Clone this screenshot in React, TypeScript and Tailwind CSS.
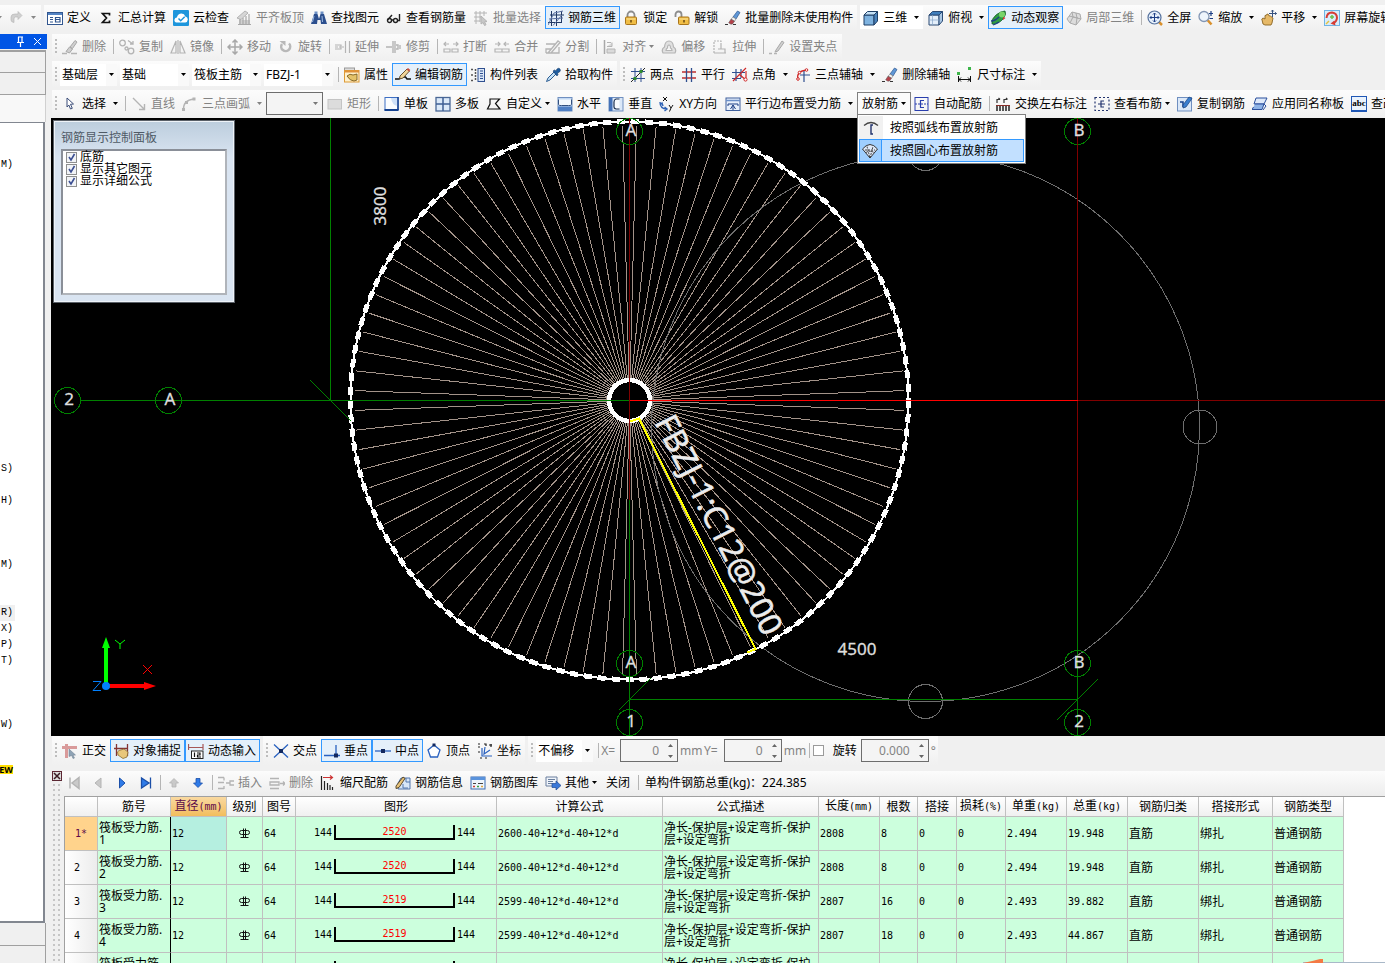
import React from 'react';
import clsx from 'clsx';

const navy = '#2f4f8f';
const gray = '#b4b4b4';

/* 16x16 toolbar icons */
const icons: Record<string, React.ReactNode> = {
  redo: (
    <path d="M3 10V7q0-3 4-3h3V1.5L14 5.500 10 9.500V7H7.500Q6 7 6 9v3.500Q3 12 3 10Z" fill="#d0d0d0" stroke={gray} strokeWidth="0.600" />
  ),
  define: (
    <>
      <rect x="0.500" y="2.500" width="15" height="12" fill="#fff" stroke="#31568f" />
      <rect x="1" y="3" width="14" height="2" fill="#5484c4" />
      <path d="M3 7.500h3M3 9.500h3M3 12h3" stroke="#31568f" />
      <path d="M8.500 7.500h4.500v4.500H8.500zM8.500 9.500H13" fill="none" stroke="#31568f" strokeWidth="1.200" />
    </>
  ),
  sigma: <path d="M11.500 5.500V3.500H4.500L8.500 8l-4 4.500h7v-2" fill="none" stroke="#111" strokeWidth="1.700" />,
  cloud: (
    <>
      <rect width="16" height="16" rx="1" fill="#1e96dc" />
      <path d="M3.500 12.500q-2.500-.500-2-3 .500-1.800 2.300-2Q5 3.500 8.500 3.500q3 .200 3.800 3 2.500.500 2.500 3-.200 2.500-2.500 3Z" fill="#fff" />
      <path d="m5.500 8.500 2.200 2.200 4-4" fill="none" stroke="#1e96dc" strokeWidth="1.500" />
    </>
  ),
  slabTop: (
    <>
      <path d="m1 8 8-7 3 2-7 6.500Z" fill="#d6d6d6" stroke={gray} />
      <path d="M3 10h11v4.500H3Z" fill="#d0d0d0" />
      <path d="M4 9v6M7 8v7M10 6v9M13 4v11M2 14.500h13" stroke="#a8a8a8" strokeWidth="1.200" />
    </>
  ),
  binoculars: (
    <>
      <path d="M3 4h3.500L8 9l1.500-5H13l3 10h-6l-.500-4h-3L6 14H0Z" fill="#2c4f8e" />
      <path d="M3.500 1.500h3V4h-3zM9.500 1.500h3V4h-3z" fill="#6c8fc4" />
      <path d="M3 6 1.500 12M11 6l.500 6" stroke="#9db9e2" />
    </>
  ),
  glasses: (
    <g fill="none" stroke="#222" strokeWidth="1.400">
      <circle cx="3.500" cy="10.500" r="2" />
      <circle cx="9.500" cy="10.500" r="2" />
      <path d="M5.500 10h2M1.500 10 6 5M11.500 10.500h2V4" />
    </g>
  ),
  batchSelect: (
    <>
      <path d="M1 3h13M1 7h7M1 11h6M3 1v13M7 1v11M11 1v5" stroke={gray} fill="none" />
      <path d="m8 6 6 5.500-2.500.300 1.500 3-1.500.700-1.400-3L8 14Z" fill="#c8c8c8" stroke={gray} />
    </>
  ),
  rebar3d: (
    <g fill="none" stroke="#1f3864">
      <path d="M2 5h14M0 12.500h13M3.500 1v15M8.500 1v15M13.500 1v12" />
      <path d="M1 9 15 8M0 15 6 3l9-2M5 15.500 14 5" stroke="#5a70a0" />
    </g>
  ),
  lock: (
    <>
      <path d="M4.500 8V5a3.500 3.500 0 0 1 7 0v3" fill="none" stroke="#8c8c8c" strokeWidth="1.800" />
      <rect x="2.500" y="7" width="11" height="7.500" rx="1" fill="#f0bd45" stroke="#a8741a" />
      <path d="M3.500 9h9" stroke="#fbe49c" />
      <path d="M8 10v2.500" stroke="#6b4a10" strokeWidth="1.500" />
    </>
  ),
  unlock: (
    <>
      <path d="M1.500 7V4.500a3 3 0 0 1 6 0V8" fill="none" stroke="#8c8c8c" strokeWidth="1.800" />
      <rect x="4.500" y="7" width="10.500" height="7.500" rx="1" fill="#f0bd45" stroke="#a8741a" />
      <path d="M5.500 9h8.500" stroke="#fbe49c" />
      <path d="M10 10v2.500" stroke="#6b4a10" strokeWidth="1.500" />
    </>
  ),
  eraser: (
    <>
      <path d="M8 7 12.500 1 15 2.500 11 9Z" fill="#5f97d6" stroke="#2d568f" strokeWidth="0.700" />
      <path d="m8 7 3 2-1.500 2.200-3.500-2Z" fill="#f2f2f2" stroke="#777" strokeWidth="0.600" />
      <path d="m6 9.200 3.500 2L7.500 14q-2 .800-3.800-1.200Z" fill="#b5424a" stroke="#555" strokeWidth="0.500" />
      <path d="M0 14.500h3M8 14.500h3" stroke="#333" />
    </>
  ),
  brushGray: (
    <>
      <path d="m8 8 5-6.500 2 1.500-4.500 6.500ZM4 12.500 7.500 8l3 2-3 4Z" fill="#cfcfcf" stroke="#a8a8a8" />
      <path d="M0 14.500h5M9 14.500h6" stroke={gray} strokeWidth="1.500" />
    </>
  ),
  cube: (
    <>
      <path d="M1 5h10v10H1Z" fill="#7fb3e0" stroke="#1e3f66" />
      <path d="m1 5 3.500-3.500h10L11 5Z" fill="#c5e1f6" stroke="#1e3f66" />
      <path d="m11 5 3.500-3.500V11L11 15Z" fill="#4a82bb" stroke="#1e3f66" />
    </>
  ),
  cubeTop: (
    <>
      <path d="M1 5h10v10H1Z" fill="#e4effa" stroke="#2a4a74" />
      <path d="m1 5 3.500-3.500h10L11 5Z" fill="#3f7fbd" stroke="#2a4a74" />
      <path d="m11 5 3.500-3.500V11L11 15Z" fill="#a9c6e3" stroke="#2a4a74" />
      <path d="M4.500 5v10M1 10h10" stroke="#87a6c8" strokeWidth="0.700" />
    </>
  ),
  orbit: (
    <>
      <path d="M1 14Q0 9 5 5t9-4q2 3-2 8t-11 5Z" fill="#2f9c44" stroke="#17602a" strokeWidth="0.800" />
      <circle cx="11" cy="4.500" r="3" fill="#79d46a" />
      <path d="M0 11q4 0 8-4M2 15q3-1 6-3" fill="none" stroke="#1d3f85" strokeWidth="1.300" />
      <path d="m12 7 2.500 1L12 10Z" fill="#d33" />
    </>
  ),
  local3d: (
    <>
      <path d="M1 9 6 2l8 2 1 5-5 6-6-2Z" fill="#dcdcdc" stroke="#ababab" />
      <path d="m6 2 1 5-3 6M7 7l8 2M10 3l1 5-1 7M3 6l9 2" fill="none" stroke="#ababab" />
    </>
  ),
  fullscreen: (
    <>
      <path d="m12 12 3 3" stroke="#d9902c" strokeWidth="2.500" />
      <circle cx="7.500" cy="7.500" r="6.500" fill="#e6f0fb" stroke="#55719d" strokeWidth="1.200" />
      <path d="M7.500 3v9M3 7.500h9M6 4.500 7.500 3 9 4.500M6 10.500 7.500 12 9 10.500M4.500 6 3 7.500 4.500 9M10.500 6 12 7.500 10.500 9" fill="none" stroke="#1d3f85" />
    </>
  ),
  zoom: (
    <>
      <path d="m9.500 10 4 4.500" stroke="#d9902c" strokeWidth="2.600" />
      <circle cx="6" cy="6.500" r="5" fill="#eef5fc" stroke="#8296b4" strokeWidth="1.300" />
      <path d="M13 1v5M11 3.500h4M11.500 8.500h3.500" stroke="#1d3f85" strokeWidth="1.200" />
    </>
  ),
  pan: (
    <>
      <path d="M2 14 .800 9l1.200-1 2 1V5.500l1.500-.300L6 4l1.500.500.300 1.200 1.500.300L12 8l-1 5-1 2H4Z" fill="#e6b968" stroke="#8a6420" strokeWidth="0.900" />
      <path d="M11.500 0v7M8 3.500h7.500M10.300 1.500 11.500 0l1.200 1.500M14 2.300 15.500 3.500 14 4.700" fill="none" stroke="#37517e" />
    </>
  ),
  screenRotate: (
    <>
      <rect x="0.500" y="0.500" width="15" height="15" fill="#d9ecfa" stroke="#6fb4e4" />
      <path d="M2.500 8q.500-5.500 5.500-5.500 5 .500 5 5.500-.500 4-3.500 5" fill="none" stroke="#d63c34" strokeWidth="2" />
      <path d="m10.500 10.500-4 3 5 2Z" fill="#d63c34" />
      <path d="M6 7h4M8 5v4" stroke="#6cbf4b" strokeWidth="1.500" />
      <path d="M2 14 5 11" stroke="#e7c33c" strokeWidth="1.500" />
    </>
  ),
  copyGray: (
    <g fill="none" stroke={gray} strokeWidth="1.300">
      <circle cx="3.500" cy="4" r="2.800" />
      <circle cx="12" cy="12" r="2.800" />
      <circle cx="7.500" cy="9.500" r="1.500" />
      <path d="M9 1.500 14 5m0-3v3h-3" />
    </g>
  ),
  mirror: <path d="M6 2v12H1ZM10 2v12h5ZM8 1v14" fill="none" stroke={gray} strokeWidth="1.200" />,
  move: (
    <path d="M8 1v14M1 8h14M5.500 3.500 8 1l2.500 2.500M5.500 12.500 8 15l2.500-2.500M3.500 5.500 1 8l2.500 2.500M12.500 5.500 15 8l-2.500 2.500" fill="none" stroke="#a8a8a8" strokeWidth="1.500" />
  ),
  rotate: (
    <>
      <path d="M4 5a4.500 4.500 0 1 0 7-.500" fill="none" stroke="#b8b8b8" strokeWidth="2.500" />
      <path d="M1.500 2h6v5Z" fill="#b8b8b8" />
    </>
  ),
  extend: <path d="M0 8h3M4 8h2M7 8h2M0 6h6v4H0M10.500 2v12M14.500 2v12" fill="none" stroke={gray} strokeWidth="1.200" />,
  trim: <path d="M0 8h6M10 6h2v4h-2M14 6v4M7 2v12M9 2v12" fill="none" stroke={gray} strokeWidth="1.400" />,
  breakIt: <path d="M1 13h6v-3H1zM9 13h6v-3H9zM6 5H1m2-2L1 5l2 2M10 5h5m-2-2 2 2-2 2" fill="none" stroke={gray} strokeWidth="1.200" />,
  merge: <path d="M1 13h7v-3H1zM8 13h7v-3H8zM1 5h5M4 3l2 2-2 2M15 5h-5m2-2-2 2 2 2" fill="none" stroke={gray} strokeWidth="1.200" />,
  split: <path d="M1 5h9M1 14h13V8M1 14v-4h5M3 14 13 2l2 1.500L6 14" fill="none" stroke={gray} strokeWidth="1.300" />,
  align: (
    <>
      <path d="M2.500 1v14" stroke="#a8a8a8" strokeWidth="1.500" />
      <path d="M5 3.500h4M5 7.500h5v-4M5 10h8v4H5z" fill="#dadada" stroke={gray} />
    </>
  ),
  offset: (
    <g fill="#e0e0e0" stroke={gray} strokeWidth="1.200">
      <path d="M2 14q-2-4 1.500-6 .500-6 4.500-6t4.500 6q3.500 2 1.500 6Z" />
      <path d="M5 11.500q0-2 1.500-2.500 0-3 1.500-3t1.500 3q1.500.500 1.500 2.500Z" fill="#f7f7f7" />
    </g>
  ),
  stretch: (
    <g fill="none" stroke={gray} strokeWidth="1.200">
      <path d="M2 14V2h7v3" strokeDasharray="2 1" />
      <path d="M2 14h12M9 5v5h4v4M6 10h3" />
    </g>
  ),
  grip: (
    <>
      <path d="M0 14.500h3M5 14.500h3" stroke={gray} strokeWidth="1.500" />
      <path d="m7 11 6-9 2 1.500-6 8.500-3 1Z" fill="#d0d0d0" stroke="#a8a8a8" />
    </>
  ),
  property: (
    <>
      <rect x="0.500" y="1" width="10" height="3" fill="#ddd" stroke="#999" />
      <rect x="0.500" y="3.500" width="14.500" height="11.500" fill="#fff1cd" stroke="#dd9a35" />
      <path d="M1 4.500h14" stroke="#e0913a" strokeWidth="2" />
      <path d="M3 9q3-3 6-1l4-1v6l-3 1q-4 0-7-5Z" fill="#e4c269" stroke="#6e5114" strokeWidth="0.800" />
    </>
  ),
  editRebar: (
    <>
      <path d="M0 12h4l2.500-2h4L12 12h4" fill="none" stroke="#111" strokeWidth="1.500" />
      <path d="m5 9 7-7 2.500 2L8 11l-3.500 1Z" fill="#f0d59a" stroke="#5c4420" strokeWidth="0.900" />
      <path d="m11.500 2.500 1.500-1.500 2.300 2L14 4.500Z" fill="#cc4b3d" />
    </>
  ),
  memberList: (
    <>
      <path d="M1 2.500h3M1 8h3M1 13.500h3M5.500 2v12" stroke="#555" strokeWidth="1.500" strokeDasharray="2 1" />
      <rect x="8" y="1.500" width="6.500" height="13" fill="#dce8f8" stroke={navy} />
      <path d="M10 4h3M10 6.500h3M10 9h3M10 11.500h3" stroke={navy} />
    </>
  ),
  pick: (
    <>
      <path d="M1.500 14.500 3 11l6-6 2 2-6 6Z" fill="#c6e2f7" stroke="#2c5d93" />
      <path d="m8 4 1.500-1L11 4l1-2q2-1.500 3 0t-.500 3L12.500 6l.500 1.500L12 9Z" fill="#1f5da0" stroke="#153c6c" strokeWidth="0.600" />
    </>
  ),
  twoPoint: (
    <>
      <path d="M1 4.500h14M1 11.500h14M5 1v14M11 1v14" stroke={navy} />
      <path d="M1 15 15 1" stroke="#222" />
      <path d="M3.500 10h3v3h-3zM9.500 3h3v3h-3z" fill="#2f8c2f" />
    </>
  ),
  parallel: (
    <>
      <path d="M1 5h14M1 11h14" stroke="#c02f2f" strokeWidth="1.300" />
      <path d="M5.500 1v14M10.500 1v14" stroke={navy} strokeWidth="1.300" />
    </>
  ),
  pointAngle: (
    <>
      <path d="M0 5.500h13M0 11.500h9M4 2v12M9 2v9" stroke={navy} strokeWidth="1.200" />
      <path d="M1 14 14 1M8 8l6 5M14 4v7" stroke="#d02828" strokeWidth="1.200" />
      <circle cx="13.500" cy="12.500" r="1.600" fill="#fff" stroke="#d02828" />
    </>
  ),
  threePoint: (
    <>
      <path d="M3 12Q1 4 12 3" fill="none" stroke="#d02828" strokeWidth="1.400" />
      <path d="M5 8h10M9 4v11" stroke={navy} strokeWidth="1.200" />
      <circle cx="3" cy="12" r="1.300" fill="#fff" stroke="#d02828" />
      <circle cx="4.500" cy="5.500" r="1.300" fill="#fff" stroke="#d02828" />
      <circle cx="11.500" cy="3" r="1.300" fill="#fff" stroke="#d02828" />
    </>
  ),
  dimension: (
    <>
      <path d="M1.500 9v6M13.500 9v6M2 12.500h11M4 10.500 2 12.500l2 2M11 10.500l2 2-2 2" fill="none" stroke="#111" />
      <path d="M0 5h3v3H0zM11 0h3v3h-3z" fill="#3db54a" />
    </>
  ),
  cursor: <path d="m5 2 6.500 6-3 .300 1.800 4-1.800.700-1.700-4L5 11Z" fill="#fff" stroke="#3b4d78" />,
  lineGray: <path d="m2 2 11 11M13.500 8v5.500H8" fill="none" stroke={gray} strokeWidth="1.400" />,
  arcGray: (
    <>
      <path d="M1.500 14Q1 4 12 3" fill="none" stroke={gray} strokeWidth="1.400" />
      <path d="M0 12h3v3H0zM3 5h3v3H3zM10.500 1.500h3v3h-3z" fill={gray} />
    </>
  ),
  rectGray: <rect x="1" y="3.500" width="13.500" height="9.500" fill="#dcdcdc" stroke="#c4c4c4" />,
  oneSlab: (
    <>
      <rect x="1" y="1.500" width="13" height="12.500" fill="#fbfdff" stroke="#3d6fc4" />
      <path d="M7 2h6.500v8Q8 9 7 2Z" fill="#cfe1f8" />
      <path d="M.500 14h14" stroke="#14418f" strokeWidth="2" />
      <path d="M14 1v13" stroke="#14418f" strokeWidth="1.500" />
    </>
  ),
  multiSlab: (
    <>
      <rect x="1" y="1.500" width="14" height="13.500" fill="#dbe9f9" stroke="#4a6795" strokeWidth="1.300" />
      <path d="M8 1.500v13.500M1 8h14" stroke="#3f5f94" strokeWidth="1.500" />
    </>
  ),
  custom: <path d="M4 3h9.500L9.500 7.500l4.500 5.500H1.500L4 8Z" fill="none" stroke="#111" strokeWidth="1.200" />,
  horizontal: (
    <>
      <rect x="1" y="1.500" width="14" height="13.500" fill="#c3d8f3" stroke="#6f8fc0" />
      <path d="M1 10.500h14V15H1Z" fill="#4f7fc4" />
      <path d="M1.500 3.500v5q1 1.500 3 1h7q2 .500 3-1v-5" fill="#f4f9fe" stroke="#33507f" />
    </>
  ),
  vertical: (
    <>
      <rect x="1" y="1.500" width="14" height="13.500" fill="#dbe8f8" stroke="#6f8fc0" />
      <path d="M1 1.500h3.500V15H1Z" fill="#4472b8" />
      <path d="M11.500 3H8q-2 .500-2 3v5q0 1.500 2 2h3.500" fill="#f8fbfe" stroke="#1f3352" strokeWidth="1.200" />
    </>
  ),
  xy: (
    <>
      <path d="m4 1 4 4M8 1 4 5M10 9l2 3 2-3M12 12l-1.500 3.500" stroke="#111" fill="none" />
      <path d="M1 6q0 7 7 7M5.500 11 8 13l-2.500 2M1 9l2-2 1 3" fill="none" stroke="#2e62b5" strokeWidth="1.400" />
    </>
  ),
  edges: (
    <>
      <rect x="1" y="2" width="14" height="12.500" fill="#e8f0fb" stroke="#3f5f9c" />
      <path d="M1 4.500h14" stroke="#6b8fc8" strokeWidth="1.500" />
      <path d="M3 10V8h10v2M5.500 13 8 9l2.500 4M8 9v5" fill="none" stroke="#1d3f85" />
    </>
  ),
  auto: (
    <g fill="none" stroke="#2a3fae">
      <rect x="1" y="1.500" width="13" height="13" />
      <path d="M10 4.500H6.500v7H10" strokeWidth="1.200" />
      <path d="M1 8h13" strokeDasharray="2 1" />
    </g>
  ),
  swap: (
    <>
      <path d="M2 7V3.500h3M3.500 2 5 3.500M9 7V3.500h3M11 2l1.500 1.500" fill="none" stroke="#333" strokeWidth="1.200" />
      <path d="M2 10v5M5 10v5M8 10v5M11 10v5M14 10v5" stroke="#222" strokeWidth="1.500" />
      <path d="M1 9.500h14" stroke="#8a2f2a" />
    </>
  ),
  viewRebar: (
    <g fill="none" stroke="#23346e" strokeWidth="1.200">
      <path d="M1 1.500h14v13H1Z" strokeDasharray="2 2" />
      <path d="M10 5H7v6h3M4 8h7" />
    </g>
  ),
  copyRebar: (
    <>
      <rect x="0.500" y="1.500" width="14" height="13.500" fill="#dbe8f8" stroke="#6f8fc0" />
      <path d="M3 6h3v5" fill="none" stroke="#14418f" strokeWidth="1.500" />
      <path d="m6 9 6-8 3 1.500L9 11l-3 1Z" fill="#3a7fd0" stroke="#173f7a" strokeWidth="0.700" />
    </>
  ),
  applySame: (
    <>
      <path d="M4 2h11l-3 6H2Z" fill="#dfeafa" stroke="#2b4f9c" />
      <path d="M3 8h9l-2 5.500H0L1.500 11" fill="#8eb3e6" stroke="#2b4f9c" />
      <path d="m12 8 2 2-3 4" fill="none" stroke="#2b4f9c" />
    </>
  ),
  ortho: (
    <>
      <path d="M0 4.500h15M4.500 1v14" stroke="#d99a9a" strokeWidth="3" />
      <path d="m7 6 6.500 6-2.500.200 1.500 2.800-1.500.500-1.300-3L7 13.500Z" fill="#8fa3b5" stroke="#6a7b8c" strokeWidth="0.500" />
    </>
  ),
  snap: (
    <>
      <path d="M3.500 1v12M1 5.500h5M14.500 1v12M5 5.500h10" stroke="#843434" strokeWidth="1.300" />
      <path d="M5 12q-1.500-4 1-4.500L11 6l4 3-1 5-4 1.500Z" fill="#e9c77b" stroke="#8c6d2e" strokeWidth="0.800" />
    </>
  ),
  dynInput: (
    <>
      <path d="M.500 1v6M15 1v6M.500 4.500H15" fill="none" stroke="#a65757" strokeWidth="1.200" />
      <rect x="3.500" y="8" width="11.500" height="7.500" fill="#fff" stroke="#222" />
      <path d="M6.500 9.500v4.500M9 10h3v2H9.500v2H13" fill="none" stroke="#111" strokeWidth="1.200" />
    </>
  ),
  cross: (
    <>
      <path d="M1 1.500 15 14.500M15 1.500 1 14.500" stroke="#2a62c0" strokeWidth="1.300" />
      <rect x="6" y="6" width="4" height="4" fill="#12285e" />
    </>
  ),
  perp: (
    <>
      <path d="M0 12.500h16M12 2v11" stroke="#2a62c0" strokeWidth="1.300" />
      <rect x="10" y="10.500" width="4" height="4" fill="#12285e" />
    </>
  ),
  mid: (
    <>
      <path d="M0 8h16" stroke="#2a62c0" strokeWidth="1.300" />
      <rect x="6" y="6" width="4" height="4" fill="#12285e" />
    </>
  ),
  vertex: (
    <>
      <path d="m8 2 6 5-2.500 7h-7L2 7Z" fill="#fff" stroke="#2a62c0" strokeWidth="1.300" />
      <path d="M6.500.500h3v3h-3z" fill="#12285e" />
    </>
  ),
  coord: (
    <>
      <path d="M5 5v8h10M8 4l-1 7 6-4" fill="none" stroke="#2a62c0" strokeWidth="1.200" />
      <path d="M1 1h2M1 4h2M1 9h2M3 15h2M8 15h2M14 1v3M12 2h3M7 1h2v2" stroke="#222" fill="none" strokeWidth="1.200" />
    </>
  ),
  first: <path d="M4 2.500v11M13 2.500v11L6 8Z" fill="#c9c9c9" stroke={gray} strokeWidth="1.500" />,
  prev: <path d="M11 3v10L5 8Z" fill="#c9c9c9" stroke={gray} />,
  next: <path d="M5.500 3v10l5.500-5Z" fill="#2f7be8" stroke="#1b4fa8" />,
  last: <path d="M3.500 3v10L11 8ZM12.500 2.500v11" fill="#2f7be8" stroke="#1b4fa8" strokeWidth="1.300" />,
  up: <path d="m8 3.500 4.500 4.500H10v4H6V8H3.500Z" fill="#c9c9c9" stroke={gray} strokeWidth="0.800" />,
  down: <path d="M8 12.500 3.500 8H6V3.500h4V8h2.500Z" fill="#2f7be8" stroke="#1b4fa8" strokeWidth="0.800" />,
  insert: <path d="M0 2.500h6M0 7.500h6M0 13.500h6M6 2.500v3M6 11v3M16 6h-4v4h4M12 8H8" fill="none" stroke={gray} strokeWidth="1.300" />,
  remove: <path d="M1 3.500h9M1 7h9v3H1zM1 13.500h9M11 8.500h5M14 6.500l2 2-2 2" fill="none" stroke={gray} strokeWidth="1.300" />,
  scaleRebar: (
    <>
      <path d="M1.500 1v14M4.500 6v9M7.500 8v7M10 10v5M12.500 12v3" stroke="#222" strokeWidth="1.200" />
      <path d="M3 2.500h9M10 .500l2.500 2-2.500 2" fill="none" stroke="#c33" strokeWidth="1.200" />
    </>
  ),
  rebarInfo: (
    <>
      <path d="M6 3h9v11H3V8Z" fill="#d7e6f8" stroke="#5277ad" />
      <path d="M8 9v4h5M11 3v4h4" fill="none" stroke="#5277ad" />
      <path d="m1 11 7-9 2 1.500-6 9-3 1Z" fill="#e7c37a" stroke="#4c3b1d" strokeWidth="0.900" />
    </>
  ),
  rebarLib: (
    <>
      <rect x="1" y="2" width="14" height="12" fill="#eef5fc" stroke="#3b6bb0" />
      <path d="M1 3.500h14" stroke="#5a93dc" strokeWidth="3" />
      <path d="M3 8.500h3M8 8.500h5" stroke="#444" />
      <path d="M3 11.500h2" stroke="#d03c30" strokeWidth="1.500" />
      <path d="M7 11.500h2" stroke="#35a244" strokeWidth="1.500" />
      <path d="M11 11.500h2" stroke="#e0a33a" strokeWidth="1.500" />
    </>
  ),
  other: (
    <>
      <path d="M1 2h11v9H1Z" fill="#f0f4fa" stroke="#6a7f9e" />
      <path d="M3 4.500h7M3 6.500h5M3 8.500h4" stroke="#6a7f9e" />
      <path d="M7 8.500h4V6l5 4.500-5 4.500v-2.500H7Z" fill="#3b78d8" stroke="#1f4b95" strokeWidth="0.700" />
    </>
  ),
  arcRadial: (
    <>
      <path d="M1 5.500q7-6 14 0" fill="none" stroke="#444" strokeWidth="1.300" />
      <path d="M10 5H8v9h2" fill="none" stroke="#23346e" strokeWidth="1.400" />
    </>
  ),
  centerRadial: (
    <>
      <path d="M.500 6q7.500-9 15 0L8 15Z" fill="#dfe9f8" stroke="#333" />
      <path d="M4 9.500q4-2.500 8 0M5 3.500 8 15l3-11.500M3 7h10" fill="none" stroke="#333" strokeWidth="0.900" strokeDasharray="2 1" />
    </>
  ),
};

const Icon = ({ name }: { name: string }) => (
  <svg className="size-4 shrink-0" viewBox="0 0 16 16" aria-hidden="true">
    {icons[name]}
  </svg>
);

const Arrow = ({ className }: { className?: string }) => (
  <svg className={clsx('h-[3px] w-[5px] shrink-0', className)} viewBox="0 0 5 3" aria-hidden="true">
    <path d="M0 0h5L2.500 3Z" fill="currentColor" />
  </svg>
);

const Grip = () => (
  <svg className="h-4 w-[7px] shrink-0" viewBox="0 0 7 16" aria-hidden="true">
    <path d="M3 0h2v2H3zM3 4h2v2H3zM3 8h2v2H3zM3 12h2v2H3z" fill="#bdbdbd" />
  </svg>
);

const Sep = ({ className = 'w-[6px]' }: { className?: string }) => (
  <span className={clsx('flex shrink-0 justify-center', className)}>
    <span className="h-[15px] w-px bg-[#b5b5b5]" />
  </span>
);

interface ToolProps {
  icon: string;
  label: string;
  disabled?: boolean;
  active?: boolean;
  /** split = separate arrow part, menu = arrow right behind the label */
  arrow?: 'split' | 'menu';
  className?: string;
}

const Tool: React.FC<ToolProps> = ({ icon, label, disabled, active, arrow, className }) => (
  <button
    type="button"
    disabled={disabled}
    aria-pressed={active}
    className={clsx(
      'flex h-[23px] shrink-0 items-center border pr-[3px] pl-0.5',
      active ? 'border-[#3399ff] bg-[#e5f0fa]' : 'border-transparent',
      disabled ? 'text-[#838383]' : 'text-black',
      className,
    )}
  >
    <Icon name={icon} />
    <span className="ml-1">{label}</span>
    {arrow === 'split' && <Arrow className="ml-[7px]" />}
    {arrow === 'menu' && <Arrow className="ml-[3px]" />}
  </button>
);

const Toolbar = ({ children, className }: { children: React.ReactNode; className?: string }) => (
  <div className={clsx('flex h-full shrink-0 items-center bg-gradient-to-b from-[#fcfcfc] to-[#f0f0f0]', className)}>{children}</div>
);

const Combo = ({ value, label, className }: { value: string; label: string; className: string }) => (
  <span className={clsx('relative flex h-[22px] shrink-0 items-center bg-white', className)}>
    <select aria-label={label} className="size-full appearance-none pl-0.5 outline-none">
      <option>{value}</option>
    </select>
    <span className="pointer-events-none absolute inset-y-0 right-0 flex w-[11px] items-center bg-[#f9f9f9]">
      <Arrow className="ml-[3px]" />
    </span>
  </span>
);

const Spin = ({ value, label, className }: { value: string; label: string; className: string }) => (
  <span className={clsx('flex h-[23px] shrink-0 items-center border border-[#6d6d6d] bg-[#f4f4f4]', className)}>
    <input aria-label={label} defaultValue={value} className="w-full min-w-0 bg-transparent pr-2 text-right text-[#838383] outline-none" />
    <svg className="mr-[3px] h-[16px] w-[7px] shrink-0" viewBox="0 0 7 16" aria-hidden="true">
      <path d="M1 4 3.500 1 6 4ZM1 12l2.500 3L6 12Z" fill="#666" />
    </svg>
  </span>
);

const TopBar = () => (
  <header className="flex h-[34px] shrink-0 items-center overflow-hidden pt-[5px] pb-1">
    <Toolbar className="mr-[3px] w-[41px]">
      <Arrow className="-ml-[3px] text-[#888]" />
      <button type="button" disabled aria-label="重做" className="ml-1.5">
        <Icon name="redo" />
      </button>
      <Arrow className="ml-[7px] text-[#888]" />
    </Toolbar>
    <Toolbar className="mr-[3px]">
      <Tool icon="define" label="定义" />
      <Tool icon="sigma" label="汇总计算" />
      <Tool icon="cloud" label="云检查" />
      <Tool icon="slabTop" label="平齐板顶" disabled />
      <Tool icon="binoculars" label="查找图元" />
      <Tool icon="glasses" label="查看钢筋量" />
      <Tool icon="batchSelect" label="批量选择" disabled />
      <Tool icon="rebar3d" label="钢筋三维" active />
      <Tool icon="lock" label="锁定" />
      <Tool icon="unlock" label="解锁" />
      <Tool icon="eraser" label="批量删除未使用构件" />
    </Toolbar>
    <Toolbar>
      <Tool icon="cube" label="三维" arrow="split" className="mr-0.5 bg-white" />
      <Tool icon="cubeTop" label="俯视" arrow="split" />
      <Tool icon="orbit" label="动态观察" active />
      <Tool icon="local3d" label="局部三维" disabled />
      <Sep />
      <Tool icon="fullscreen" label="全屏" />
      <Tool icon="zoom" label="缩放" arrow="split" />
      <Tool icon="pan" label="平移" arrow="split" />
      <Tool icon="screenRotate" label="屏幕旋转" />
    </Toolbar>
  </header>
);

/* accelerator hints of the module tree, by row */
const treeRows: Record<number, string> = {
  2: '(M)',
  21: '(S)',
  23: '(H)',
  27: '(M)',
  30: '(R)',
  31: '(X)',
  32: '(P)',
  33: '(T)',
  37: '(W)',
};

const Sidebar = () => (
  <aside className="flex w-[47px] shrink-0 flex-col">
    <div className="flex h-[15px] items-center justify-end gap-2 bg-[#0055e5] pr-[5px] text-white">
      <button type="button" aria-label="固定">
        <svg className="h-[11px] w-[9px]" viewBox="0 0 9 11">
          <path d="M2.500 1v5M2 1h5M6 1v5M1 6.500h7M4.500 7v4" fill="none" stroke="#fff" strokeWidth="1.200" />
        </svg>
      </button>
      <button type="button" aria-label="关闭面板">
        <svg className="size-[9px]" viewBox="0 0 9 9">
          <path d="m1 1 7 7M8 1 1 8" stroke="#fff" />
        </svg>
      </button>
    </div>
    <div className="flex w-[46px] flex-1 flex-col">
      <div className="mt-px h-[22px] border-t-2 border-r border-[#a0a0a0]" />
      <div className="h-[23px] border-y border-r border-[#a0a0a0]" />
      <div className="h-[27px] border-r border-[#d0d0d0] bg-[#f8f8f8]" />
      <ul className="w-[45px] flex-1 overflow-hidden border-t border-r-2 border-b-2 border-t-[#828790] border-r-[#828790] border-b-[#828790] bg-white pt-0.5 font-['Liberation_Mono','Noto_Sans_CJK_SC',monospace] text-[10px] leading-4">
        {Array.from({ length: 40 }, (_, i) => (
          <li key={i} className={clsx('flex h-4 w-[15px] justify-end pr-0.5', i === 30 && 'bg-[#f0f0f0]')}>
            {treeRows[i]}
          </li>
        ))}
        <li className="flex w-[13px] justify-end">
          <span className="bg-[#ffde00] font-sans text-[9px] leading-[9px] font-bold">EW</span>
        </li>
      </ul>
      <div className="h-[23px] border-r border-b border-[#a0a0a0]" />
      <div className="h-[17px] border-r border-[#a0a0a0]" />
    </div>
  </aside>
);

const EditBar = () => (
  <div className="mb-[2px] flex h-[25px] shrink-0 pl-px">
    <Toolbar className="pr-px">
      <Grip />
      <Tool icon="brushGray" label="删除" disabled />
      <Sep />
      <Tool icon="copyGray" label="复制" disabled />
      <Tool icon="mirror" label="镜像" disabled />
      <Sep />
      <Tool icon="move" label="移动" disabled />
      <Tool icon="rotate" label="旋转" disabled />
      <Sep />
      <Tool icon="extend" label="延伸" disabled />
      <Tool icon="trim" label="修剪" disabled />
      <Sep />
      <Tool icon="breakIt" label="打断" disabled />
      <Tool icon="merge" label="合并" disabled />
      <Tool icon="split" label="分割" disabled />
      <Sep />
      <Tool icon="align" label="对齐" disabled arrow="menu" />
      <Tool icon="offset" label="偏移" disabled />
      <Tool icon="stretch" label="拉伸" disabled />
      <Sep />
      <Tool icon="grip" label="设置夹点" disabled />
    </Toolbar>
  </div>
);

const MemberBar = () => (
  <div className="mb-[2px] flex h-[27px] shrink-0 gap-[3px] pl-px">
    <Toolbar>
      <Grip />
      <div className="flex gap-[3px] pr-0.5 pl-px">
        <Combo value="基础层" label="楼层" className="w-[57px]" />
        <Combo value="基础" label="构件类别" className="w-[69px]" />
        <Combo value="筏板主筋" label="构件类型" className="w-[69px]" />
        <Combo value="FBZJ-1" label="构件" className="w-[69px]" />
      </div>
      <Sep />
      <Tool icon="property" label="属性" />
      <Tool icon="editRebar" label="编辑钢筋" active />
      <Tool icon="memberList" label="构件列表" />
      <Tool icon="pick" label="拾取构件" />
    </Toolbar>
    <Toolbar>
      <Grip />
      <Tool icon="twoPoint" label="两点" />
      <Tool icon="parallel" label="平行" />
      <Tool icon="pointAngle" label="点角" arrow="split" />
      <Tool icon="threePoint" label="三点辅轴" arrow="split" />
      <Tool icon="eraser" label="删除辅轴" />
      <Tool icon="dimension" label="尺寸标注" arrow="split" />
    </Toolbar>
  </div>
);

const RadialMenu = () => (
  <div className="relative shrink-0">
    <button type="button" aria-expanded="true" className="flex h-[23px] w-[54px] items-center border border-[#808080] bg-[#fbfbfb] pl-1">
      放射筋
      <Arrow className="ml-[3px]" />
    </button>
    <div role="menu" className="absolute top-[22px] left-0 z-10 w-[169px] border border-[#808080] bg-white p-px">
      <button type="button" role="menuitem" className="flex h-[23px] w-full items-center">
        <span className="flex h-full w-6 items-center justify-center bg-[#f1f1f1]">
          <Icon name="arcRadial" />
        </span>
        <span className="ml-[7px]">按照弧线布置放射筋</span>
      </button>
      <button type="button" role="menuitem" className="flex h-[23px] w-full items-center border border-[#3399ff] bg-[#c2e0ff]">
        <span className="flex h-full w-[22px] items-center justify-center border-r border-[#3399ff] bg-[#9fcfff]">
          <Icon name="centerRadial" />
        </span>
        <span className="ml-2">按照圆心布置放射筋</span>
      </button>
    </div>
  </div>
);

const DrawBar = () => (
  <div className="flex h-[28px] shrink-0 pl-px">
    <Toolbar className="w-full pb-px">
      <Grip />
      <Tool icon="cursor" label="选择" arrow="split" />
      <Sep />
      <Tool icon="lineGray" label="直线" disabled />
      <Tool icon="arcGray" label="三点画弧" disabled arrow="split" />
      <span className="relative mr-px flex h-[23px] w-[57px] shrink-0 items-center border border-[#6d6d6d] bg-[#f4f4f4]">
        <select aria-label="画法" disabled className="size-full appearance-none" />
        <Arrow className="pointer-events-none absolute right-1 text-[#777]" />
      </span>
      <Tool icon="rectGray" label="矩形" disabled />
      <Sep />
      <Tool icon="oneSlab" label="单板" />
      <Tool icon="multiSlab" label="多板" />
      <Tool icon="custom" label="自定义" arrow="menu" />
      <Tool icon="horizontal" label="水平" />
      <Tool icon="vertical" label="垂直" />
      <Tool icon="xy" label="XY方向" className="mr-px" />
      <Tool icon="edges" label="平行边布置受力筋" arrow="split" />
      <RadialMenu />
      <Tool icon="auto" label="自动配筋" />
      <Sep />
      <Tool icon="swap" label="交换左右标注" />
      <Tool icon="viewRebar" label="查看布筋" arrow="menu" />
      <Tool icon="copyRebar" label="复制钢筋" />
      <Tool icon="applySame" label="应用同名称板" />
      <button type="button" className="flex shrink-0 items-center pl-[3px]">
        <span className="flex size-4 items-center justify-center border border-b-2 border-[#1f57b5] bg-[#eaf3fd] font-['Liberation_Serif',serif] text-[9px] leading-none font-bold">abc</span>
        <span className="ml-1">查改标注</span>
      </button>
    </Toolbar>
  </div>
);

const CX = 629.5;
const CY = 400.5;

/* 44 bars on each side of the vertical axis */
const rays = Array.from({ length: 44 }, (_, k) => ((1.44 + k * 4.119) * Math.PI) / 180).flatMap((a) => [a, -a]);

const bubbles = [
  { x: 67, y: 400, t: '2' },
  { x: 168, y: 400, t: 'A' },
  { x: 629, y: 131, t: 'A' },
  { x: 629, y: 663, t: 'A' },
  { x: 629, y: 722, t: '1' },
  { x: 1077, y: 131, t: 'B' },
  { x: 1077, y: 663, t: 'B' },
  { x: 1077, y: 722, t: '2' },
];

const Drawing = () => (
  <svg className="size-full" viewBox="51 118 1334 618" preserveAspectRatio="xMinYMin slice" role="img" aria-label="筏板主筋平面图">
    <g shapeRendering="crispEdges" fill="none">
      {rays.map((a) => (
        <line
          key={a}
          x1={CX + 23 * Math.sin(a)}
          y1={CY - 23 * Math.cos(a)}
          x2={CX + 275 * Math.sin(a)}
          y2={CY - 275 * Math.cos(a)}
          stroke="#a39389"
        />
      ))}
      <g stroke="#6e6e6e">
        <circle cx="925.500" cy="427.500" r="274" />
        <circle cx="925.500" cy="153.500" r="17" />
        <circle cx="925.500" cy="701.500" r="17" />
        <circle cx="1200" cy="427" r="17" />
      </g>
      <circle cx={CX} cy={CY} r="279" stroke="#fff" strokeWidth="2" />
      <circle cx={CX} cy={CY} r="279" stroke="#fff" strokeWidth="5" strokeDasharray="8 6" />
      <circle cx={CX} cy={CY} r="20.500" stroke="#fff" strokeWidth="4.500" />
      <g stroke="#008000">
        <path d="M80 400.500h549M330.500 118v282M310 380l41 41M629.500 500v235M1077.500 500v235M629 699.500h449M619 710l32-32M1057 720l41-41" />
        {bubbles.map((b) => (
          <circle key={`${b.x}-${b.y}`} cx={b.x + 0.5} cy={b.y + 0.5} r="13" />
        ))}
      </g>
      <path d="M629.500 118v382M1077.500 118v382M1078 400.500h307" stroke="#800000" />
      <path d="M630 400.500h448" stroke="#ff0000" />
      <path d="M630 421.500 639 418.500 755.500 649l-8 3.500" stroke="#ffff00" strokeWidth="2" />
    </g>
    <g fill="#dedede" stroke="#dedede" strokeWidth="0.300" fontFamily="'Noto Sans', sans-serif" fontSize="17" textAnchor="middle">
      {bubbles.map((b) => (
        <text key={`${b.x}-${b.y}`} x={b.x + 2} y={b.y + 5}>
          {b.t}
        </text>
      ))}
      <text x="857" y="655">4500</text>
      <text transform="translate(386 206) rotate(-90)">3800</text>
    </g>
    <text transform="translate(654 422) rotate(63)" fill="#ececec" stroke="#ececec" strokeWidth="0.500" fontFamily="'Noto Sans', sans-serif" fontSize="32">
      FBZJ-1:C12@200
    </text>
    <g>
      <path d="M106 686V645" stroke="#00ff00" strokeWidth="4" />
      <path d="m106 637 4 11h-8Z" fill="#00ff00" />
      <path d="M106 686h40" stroke="#ff0000" strokeWidth="4" />
      <path d="m156 686-12 4v-8Z" fill="#ff0000" />
      <circle cx="106" cy="686" r="4" fill="#0080ff" />
      <path d="m115 640 5 4 5-4m-5 4v5" fill="none" stroke="#00ff00" />
      <path d="m143 665 9 9m0-9-9 9" stroke="#ff0000" />
      <path d="M93 681.500h8l-8 9h8" fill="none" stroke="#0080ff" />
    </g>
  </svg>
);

const DisplayPanel = () => (
  <section className="absolute top-0.5 left-0.5 flex h-[183px] w-[182px] flex-col border border-[#5a6068] bg-gradient-to-b from-[#bccddd] to-[#d9e4f1] to-20% px-[7px] pb-[7px] outline outline-[#eef3f8] -outline-offset-2">
    <h2 className="py-2 leading-[18px] text-[#4f5a66]">钢筋显示控制面板</h2>
    <div className="-mt-[6px] flex-1 border-2 border-[#8a8f98] border-r-[#b0b4ba] border-b-[#b0b4ba] bg-white pl-[3px]">
      {['底筋', '显示其它图元', '显示详细公式'].map((name) => (
        <label key={name} className="flex h-3 items-center gap-[3px] leading-3">
          <span className="grid size-[11px] shrink-0">
            <input type="checkbox" defaultChecked className="peer col-start-1 row-start-1 appearance-none border border-[#8e8f8f] bg-[#f2f4f7]" />
            <svg className="pointer-events-none invisible col-start-1 row-start-1 size-[11px] peer-checked:visible" viewBox="0 0 11 11" aria-hidden="true">
              <path d="m3 5 2 3 3.500-6" fill="none" stroke="#3c4f92" strokeWidth="1.600" />
            </svg>
          </span>
          {name}
        </label>
      ))}
    </div>
  </section>
);

const StatusBar = () => (
  <div className="flex h-[35px] shrink-0 pb-1.5 pl-px">
    <Toolbar>
      <Grip />
      <Tool icon="ortho" label="正交" />
      <Tool icon="snap" label="对象捕捉" active />
      <Tool icon="dynInput" label="动态输入" active />
    </Toolbar>
    <Toolbar className="ml-[3px]">
      <Grip />
      <Tool icon="cross" label="交点" />
      <Tool icon="perp" label="垂点" active />
      <Tool icon="mid" label="中点" active />
      <Tool icon="vertex" label="顶点" />
      <Tool icon="coord" label="坐标" />
    </Toolbar>
    <Toolbar className="ml-[3px] text-[#838383]">
      <Grip />
      <Combo value="不偏移" label="偏移方式" className="ml-px w-[57px] text-black" />
      <span className="ml-0.5 flex">
        <Sep />
      </span>
      <label className="flex items-center gap-[5px]">
        X=
        <Spin value="0" label="X" className="w-[58px]" />
      </label>
      <span className="mr-[3px] ml-0.5 w-[21px]">mm</span>
      <label className="flex items-center gap-[6px]">
        Y=
        <Spin value="0" label="Y" className="w-[58px]" />
      </label>
      <span className="ml-0.5 w-[23px]">mm</span>
      <Sep />
      <label className="flex items-center gap-[9px] text-black">
        <input type="checkbox" className="size-[11px] appearance-none border border-[#9a9a9a] bg-white" />
        旋转
      </label>
      <Spin value="0.000" label="旋转角度" className="ml-1 w-[68px]" />
      <span className="px-0.5">°</span>
    </Toolbar>
  </div>
);

const NavButton = ({ icon, label, disabled }: { icon: string; label: string; disabled?: boolean }) => (
  <button type="button" aria-label={label} disabled={disabled} className="flex w-6 shrink-0 justify-center">
    <Icon name={icon} />
  </button>
);

const RebarBar = () => (
  <div className="flex h-[25px] shrink-0 items-center bg-gradient-to-b from-[#fcfcfc] to-[#ededed] pb-0.5">
    <NavButton icon="first" label="第一条" disabled />
    <NavButton icon="prev" label="上一条" disabled />
    <NavButton icon="next" label="下一条" />
    <NavButton icon="last" label="最后一条" />
    <Sep className="w-[4px]" />
    <NavButton icon="up" label="上移" disabled />
    <NavButton icon="down" label="下移" />
    <Sep className="w-[5px]" />
    <Tool icon="insert" label="插入" disabled />
    <Tool icon="remove" label="删除" disabled />
    <Tool icon="scaleRebar" label="缩尺配筋" />
    <Tool icon="rebarInfo" label="钢筋信息" />
    <Tool icon="rebarLib" label="钢筋图库" />
    <Tool icon="other" label="其他" arrow="menu" />
    <button type="button" className="shrink-0 px-[5px]">
      关闭
    </button>
    <Sep />
    <span className="ml-1 whitespace-nowrap">单构件钢筋总重(kg)：224.385</span>
  </div>
);

const columns: { name: string; unit?: string; col: string }[] = [
  { name: '', col: 'w-[33px]' },
  { name: '筋号', col: 'w-[73px]' },
  { name: '直径', unit: '(mm)', col: 'w-[56px]' },
  { name: '级别', col: 'w-[36px]' },
  { name: '图号', col: 'w-[33px]' },
  { name: '图形', col: 'w-[201px]' },
  { name: '计算公式', col: 'w-[166px]' },
  { name: '公式描述', col: 'w-[156px]' },
  { name: '长度', unit: '(mm)', col: 'w-[61px]' },
  { name: '根数', col: 'w-[38px]' },
  { name: '搭接', col: 'w-[39px]' },
  { name: '损耗', unit: '(%)', col: 'w-[49px]' },
  { name: '单重', unit: '(kg)', col: 'w-[61px]' },
  { name: '总重', unit: '(kg)', col: 'w-[61px]' },
  { name: '钢筋归类', col: 'w-[71px]' },
  { name: '搭接形式', col: 'w-[74px]' },
  { name: '钢筋类型', col: 'w-[71px]' },
];

const rows = [
  { no: 1, main: 2520, formula: '2600-40+12*d-40+12*d', length: 2808, count: 8, unit: '2.494', total: '19.948' },
  { no: 2, main: 2520, formula: '2600-40+12*d-40+12*d', length: 2808, count: 8, unit: '2.494', total: '19.948' },
  { no: 3, main: 2519, formula: '2599-40+12*d-40+12*d', length: 2807, count: 16, unit: '2.493', total: '39.882' },
  { no: 4, main: 2519, formula: '2599-40+12*d-40+12*d', length: 2807, count: 18, unit: '2.493', total: '44.867' },
  { no: 5, main: 2518, formula: '2598-40+12*d-40+12*d', length: 2806, count: 18, unit: '2.492', total: '44.856' },
];

const mono = "font-['DejaVu_Sans_Mono',monospace] text-[10px]";

const Cell = ({ children, className }: { children: React.ReactNode; className?: string }) => (
  <td className={clsx('border-r border-b border-[#c0c0c0] p-0 pl-px', className)}>{children}</td>
);

const RebarTable = () => (
  <table className="w-[1279px] table-fixed border-separate border-spacing-0 leading-3">
    <colgroup>
      {columns.map((c, i) => (
        <col key={i} className={c.col} />
      ))}
    </colgroup>
    <thead>
      <tr className="h-5">
        {columns.map((c, i) => (
          <th
            key={i}
            scope="col"
            className={clsx(
              'border-r border-b border-[#c0c0c0] p-0 font-normal whitespace-nowrap',
              i === 2 ? 'bg-gradient-to-b from-[#f9d9a0] to-[#f2bd5c] text-[#5c0a4a]' : 'bg-gradient-to-b from-white to-[#f0f0f0]',
            )}
          >
            {c.name}
            {c.unit && <span className={mono}>{c.unit}</span>}
          </th>
        ))}
      </tr>
    </thead>
    <tbody>
      {rows.map((r) => (
        <tr key={r.no} className="h-[34px] bg-[#ccffdd]">
          <th
            scope="row"
            className={clsx(
              'border-r border-b border-[#c0c0c0] p-0 font-normal',
              mono,
              r.no === 1 ? 'bg-[#ffd38c] text-[#5c0a4a]' : 'bg-gradient-to-r from-white to-[#ececec] pr-2',
            )}
          >
            {r.no}
            {r.no === 1 && '*'}
          </th>
          <Cell className="border-r-black pr-1 break-all whitespace-normal">筏板受力筋.{r.no}</Cell>
          <Cell className={clsx(mono, r.no === 1 && 'bg-[#b5efe0]')}>12</Cell>
          <Cell>
            <svg className="mx-auto h-[11px] w-[13px] pr-0.5" viewBox="0 0 11 11" role="img" aria-label="三级钢">
              <path d="M2.500 2.500h6q2 0 2 2t-2 2h-6q-2 0-2-2t2-2M4.500.500v9M6.500.500v9M1.500 9.500h8" fill="none" stroke="#111" />
            </svg>
          </Cell>
          <Cell className={mono}>64</Cell>
          <Cell className={mono}>
            <div className="flex items-center justify-center gap-[2px] pr-1 pb-0.5">
              144
              <span className="flex h-[15px] w-[121px] items-center justify-center border-2 border-t-0 border-black text-[#ff0000]">{r.main}</span>
              144
            </div>
          </Cell>
          <Cell className={mono}>{r.formula}</Cell>
          <Cell className="break-all whitespace-normal">净长-保护层+设定弯折-保护层+设定弯折</Cell>
          <Cell className={mono}>{r.length}</Cell>
          <Cell className={mono}>{r.count}</Cell>
          <Cell className={mono}>0</Cell>
          <Cell className={mono}>0</Cell>
          <Cell className={mono}>{r.unit}</Cell>
          <Cell className={mono}>{r.total}</Cell>
          <Cell>直筋</Cell>
          <Cell>绑扎</Cell>
          <Cell>普通钢筋</Cell>
        </tr>
      ))}
    </tbody>
  </table>
);

const RebarEditor = () => (
  <div className="flex h-[192px] shrink-0 overflow-hidden">
    <div className="w-[11px] shrink-0">
      <button type="button" aria-label="关闭编辑区" className="block">
        <svg className="size-[11px]" viewBox="0 0 11 11">
          <rect x="1.500" y="0.500" width="9" height="9" fill="#ddd" stroke="#5b2733" />
          <path d="m3 2 6 6M9 2 3 8" stroke="#3a1b22" strokeWidth="1.500" />
        </svg>
      </button>
      <svg className="h-[181px] w-[11px]" aria-hidden="true">
        <defs>
          <pattern id="dots" width="5" height="5" patternUnits="userSpaceOnUse">
            <path d="M2 2h2v2H2z" fill="#c6c6c6" />
          </pattern>
        </defs>
        <rect width="11" height="181" fill="url(#dots)" />
      </svg>
    </div>
    <div className="flex min-w-0 flex-1 flex-col">
      <RebarBar />
      <div className="relative ml-0.5 flex-1 overflow-hidden border-t border-l border-[#a0a0a0] bg-white">
        <RebarTable />
        <svg className="absolute right-0 bottom-0 h-1 w-[82px]" viewBox="0 0 82 4" aria-hidden="true">
          <path d="M0 3.500h82" stroke="#a9b8c8" />
          <path d="M0 4q10-2 17-4h3v4Z" fill="#f47a45" />
        </svg>
      </div>
    </div>
  </div>
);

const App: React.FC = () => (
  <div className="flex h-screen flex-col overflow-hidden bg-[#f0f0f0] font-['Noto_Sans','Noto_Sans_CJK_SC',sans-serif] text-[12px] leading-4 whitespace-nowrap text-black">
    <TopBar />
    <div className="flex min-h-0 flex-1 gap-1">
      <Sidebar />
      <main className="flex min-w-0 flex-1 flex-col">
        <EditBar />
        <MemberBar />
        <DrawBar />
        <div className="relative min-h-0 flex-1 bg-black">
          <Drawing />
          <DisplayPanel />
        </div>
        <StatusBar />
        <RebarEditor />
      </main>
    </div>
  </div>
);

export default App;
